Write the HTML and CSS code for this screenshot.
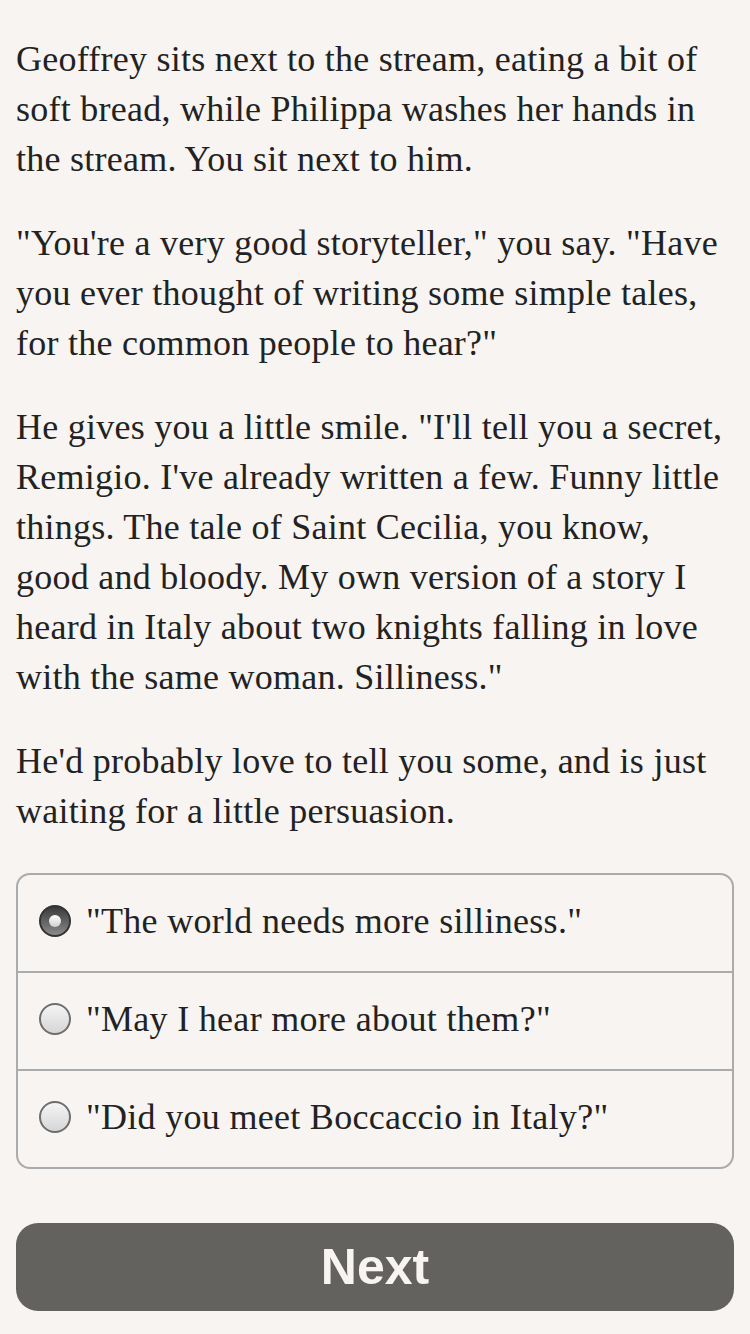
FILE: index.html
```html
<!DOCTYPE html>
<html lang="en">
<head>
    <meta charset="UTF-8">
    <meta name="viewport" content="width=device-width, initial-scale=1.0">
    <title>Story</title>
    <link rel="stylesheet" href="styles.css">
</head>
<body>
    <div class="page">
        <div class="story">
            <p>Geoffrey sits next to the stream, eating a bit of<br>soft bread, while Philippa washes her hands in<br>the stream. You sit next to him.</p>
            <p>"You're a very good storyteller," you say. "Have<br>you ever thought of writing some simple tales,<br>for the common people to hear?"</p>
            <p>He gives you a little smile. "I'll tell you a secret,<br>Remigio. I've already written a few. Funny little<br>things. The tale of Saint Cecilia, you know,<br>good and bloody. My own version of a story I<br>heard in Italy about two knights falling in love<br>with the same woman. Silliness."</p>
            <p>He'd probably love to tell you some, and is just<br>waiting for a little persuasion.</p>
        </div>

        <div class="choices">
            <label class="choice">
                <span class="radio checked"></span>
                <span class="choice-text">"The world needs more silliness."</span>
            </label>
            <label class="choice">
                <span class="radio"></span>
                <span class="choice-text">"May I hear more about them?"</span>
            </label>
            <label class="choice">
                <span class="radio"></span>
                <span class="choice-text">"Did you meet Boccaccio in Italy?"</span>
            </label>
        </div>

        <button class="next-button">Next</button>
    </div>
</body>
</html>
```

FILE: styles.css
```css
* {
    margin: 0;
    padding: 0;
    box-sizing: border-box;
}

body {
    font-family: 'Liberation Serif', 'DejaVu Serif', serif;
    background-color: #f7f4f1;
    color: #222;
}

.page {
    padding: 34px 16px 24px 16px;
}

.story p {
    font-size: 36px;
    line-height: 50px;
    letter-spacing: 0.25px;
    white-space: nowrap;
    margin-bottom: 34px;
}

.choices {
    border: 2px solid #a9abad;
    border-radius: 14px;
    margin-top: 37px;
    overflow: hidden;
}

.choice {
    display: flex;
    align-items: center;
    height: 98px;
    padding-left: 21px;
    padding-bottom: 4px;
    border-top: 2px solid #a9abad;
    font-size: 36px;
    letter-spacing: 0.3px;
}

.choice:first-child {
    border-top: none;
    height: 96px;
}

.radio {
    width: 32px;
    height: 32px;
    border-radius: 50%;
    border: 2px solid #6e6e6e;
    background: linear-gradient(#f4f4f4, #d6d6d6);
    margin-right: 15px;
    flex-shrink: 0;
    display: flex;
    align-items: center;
    justify-content: center;
}

.radio.checked {
    border-color: #333;
    background: linear-gradient(#3a3a3a, #8a8a8a);
}

.radio.checked::after {
    content: '';
    width: 12px;
    height: 12px;
    border-radius: 50%;
    background: linear-gradient(#ffffff, #d0d0d0);
}

.next-button {
    display: block;
    width: 100%;
    height: 88px;
    margin-top: 54px;
    border: none;
    border-radius: 22px;
    background-color: #64625f;
    color: #f7f4f1;
    font-family: 'Liberation Sans', Arial, sans-serif;
    font-weight: bold;
    font-size: 50px;
}
```
